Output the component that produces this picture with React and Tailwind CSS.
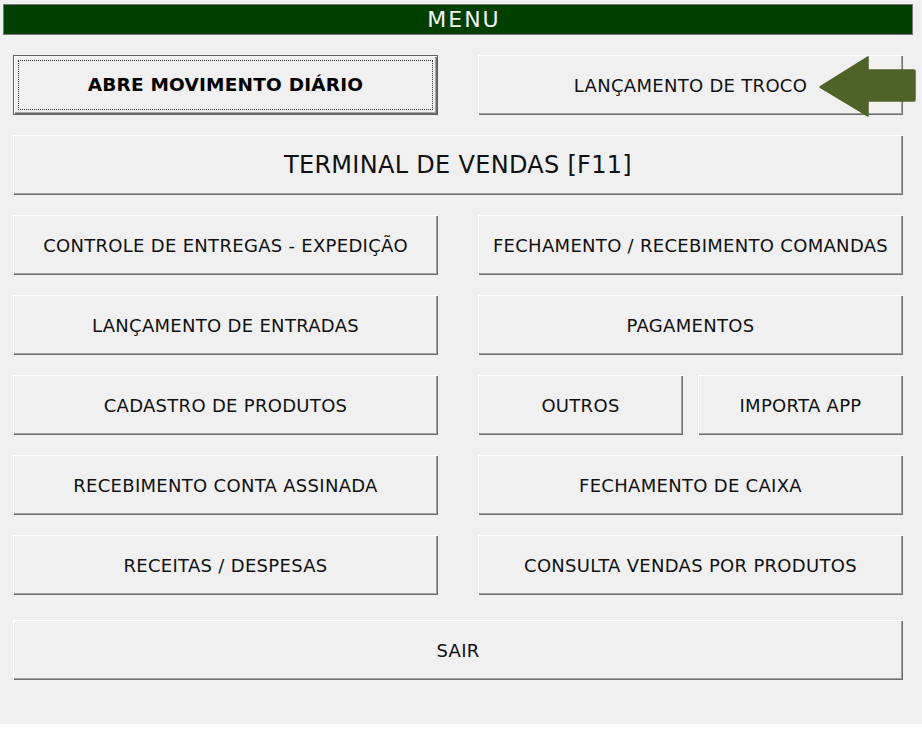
export default function App() {
  return (
    <div className="relative h-[756px] w-[922px] bg-white font-['DejaVu_Sans',sans-serif]">
      <div className="h-[724px] bg-[#f0f0f0] pt-[4px]">
        <div className="mx-[3px] flex h-[31px] w-[910px] items-center justify-center border border-[#7a7a7a] bg-[#003f00]">
          <span className="pl-[12px] text-[22px] leading-none tracking-[2px] text-[#f4f4f4]">MENU</span>
        </div>

        <div className="ml-[13px] mt-[20px] flex w-[890px] flex-col gap-[20px]">
          <div className="grid grid-cols-2 gap-[40px]">
            <FocusButton label="ABRE MOVIMENTO DIÁRIO" />
            <MenuButton label="LANÇAMENTO DE TROCO" />
          </div>

          <MenuButton label="TERMINAL DE VENDAS [F11]" big />

          <div className="grid grid-cols-2 gap-[40px]">
            <MenuButton label="CONTROLE DE ENTREGAS - EXPEDIÇÃO" />
            <MenuButton label="FECHAMENTO / RECEBIMENTO COMANDAS" />
          </div>

          <div className="grid grid-cols-2 gap-[40px]">
            <MenuButton label="LANÇAMENTO DE ENTRADAS" />
            <MenuButton label="PAGAMENTOS" />
          </div>

          <div className="grid grid-cols-2 gap-[40px]">
            <MenuButton label="CADASTRO DE PRODUTOS" />
            <div className="grid grid-cols-2 gap-[15px]">
              <MenuButton label="OUTROS" />
              <MenuButton label="IMPORTA APP" />
            </div>
          </div>

          <div className="grid grid-cols-2 gap-[40px]">
            <MenuButton label="RECEBIMENTO CONTA ASSINADA" />
            <MenuButton label="FECHAMENTO DE CAIXA" />
          </div>

          <div className="grid grid-cols-2 gap-[40px]">
            <MenuButton label="RECEITAS / DESPESAS" />
            <MenuButton label="CONSULTA VENDAS POR PRODUTOS" />
          </div>

          <div className="mt-[5px]">
            <MenuButton label="SAIR" />
          </div>
        </div>
      </div>

      {/* seta apontando para o lançamento de troco */}
      <svg
        className="absolute left-[818px] top-[55px]"
        width="100"
        height="64"
        viewBox="0 0 100 64"
      >
        <path
          d="M2 32 L50 2 L50 15 L96 15 Q97 15 97 16 L97 45 Q97 46 96 46 L50 46 L50 61 Z"
          fill="#4f6228"
          stroke="#4f6228"
          strokeWidth="1.5"
          strokeLinejoin="round"
        />
      </svg>
    </div>
  );
}

function MenuButton({ label, big = false }) {
  return (
    <button
      type="button"
      className={`flex h-[60px] w-full items-center justify-center bg-[#f0f0f0] text-[#111] shadow-[inset_1px_1px_#ffffff,inset_-1px_-1px_#6e6e6e,inset_-2px_-2px_#a3a3a3] ${
        big ? "text-[24px] tracking-[0.3px]" : "text-[18px] tracking-[0.3px]"
      }`}
    >
      {label}
    </button>
  );
}

function FocusButton({ label }) {
  return (
    <button
      type="button"
      className="flex h-[60px] w-full items-center justify-center border border-[#5f5f5f] bg-[#f0f0f0] p-[4px] shadow-[inset_1px_1px_#ffffff,inset_-1px_-1px_#6e6e6e,inset_-2px_-2px_#a3a3a3]"
    >
      <span className="flex h-full w-full items-center justify-center border border-dotted border-[#333] text-[18.5px] font-bold tracking-[0.2px] text-black">
        {label}
      </span>
    </button>
  );
}
